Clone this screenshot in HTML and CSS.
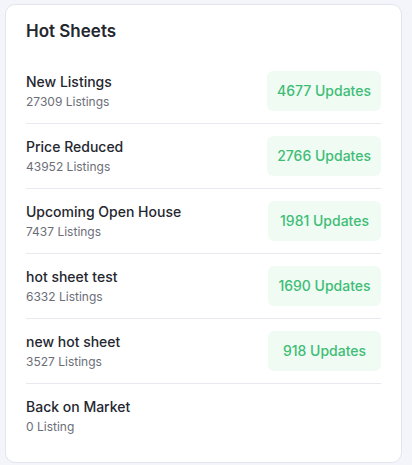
FILE: index.html
```html
<!DOCTYPE html>
<html lang="en">
<head>
<meta charset="UTF-8">
<title>Hot Sheets</title>
<link rel="stylesheet" href="styles.css">
</head>
<body>
  <!-- hot sheets card -->
  <section class="card">
    <h2 class="card-title">Hot Sheets</h2>

    <ul class="sheets">
      <li class="sheet">
        <div class="sheet-info">
          <strong>New Listings</strong>
          <span>27309 Listings</span>
        </div>
        <span class="badge">4677 Updates</span>
      </li>
      <li class="sheet">
        <div class="sheet-info">
          <strong>Price Reduced</strong>
          <span>43952 Listings</span>
        </div>
        <span class="badge">2766 Updates</span>
      </li>
      <li class="sheet">
        <div class="sheet-info">
          <strong>Upcoming Open House</strong>
          <span>7437 Listings</span>
        </div>
        <span class="badge">1981 Updates</span>
      </li>
      <li class="sheet">
        <div class="sheet-info">
          <strong>hot sheet test</strong>
          <span>6332 Listings</span>
        </div>
        <span class="badge">1690 Updates</span>
      </li>
      <li class="sheet">
        <div class="sheet-info">
          <strong>new hot sheet</strong>
          <span>3527 Listings</span>
        </div>
        <span class="badge">918 Updates</span>
      </li>
      <li class="sheet">
        <div class="sheet-info">
          <strong>Back on Market</strong>
          <span>0 Listing</span>
        </div>
      </li>
    </ul>
  </section>
</body>
</html>
```

FILE: styles.css
```css
/* page */
html, body{ height:100% }
body{
  margin:0;
  padding:4px 10px 0 5px;
  background:#f4f5fa;
  font-family: Inter, "Noto Sans", sans-serif;
  color:#25272f;
  box-sizing:border-box;
}

/* card */
.card{
  background:#fff;
  border:1px solid #e3e5ec;
  border-radius:10px;
  padding:14px 20px 14px 20px;
}
.card-title{
  margin:0 0 16px;
  font-size:17px;
  font-weight:600;
  line-height:24px;
}

/* list rows */
.sheets{
  list-style:none;
  margin:0;
  padding:0;
}
.sheet{
  display:flex;
  align-items:center;
  justify-content:space-between;
  min-height:40px;
  padding:12px 0;
  border-bottom:1px solid #e8e9ee;
}
.sheet:last-child{ border-bottom:none }
.sheet-info{
  display:flex;
  flex-direction:column;
  gap:3px;
}
.sheet-info strong{
  font-size:14px;
  font-weight:500;
  line-height:18px;
}
.sheet-info span{
  font-size:12px;
  color:#6b6e78;
  line-height:16px;
}

/* update badge */
.badge{
  min-width:113px;
  box-sizing:border-box;
  text-align:center;
  background:#f0fbf4;
  color:#3fbd76;
  font-size:14px;
  font-weight:500;
  line-height:40px;
  padding:0 10px;
  border-radius:6px;
}
```
